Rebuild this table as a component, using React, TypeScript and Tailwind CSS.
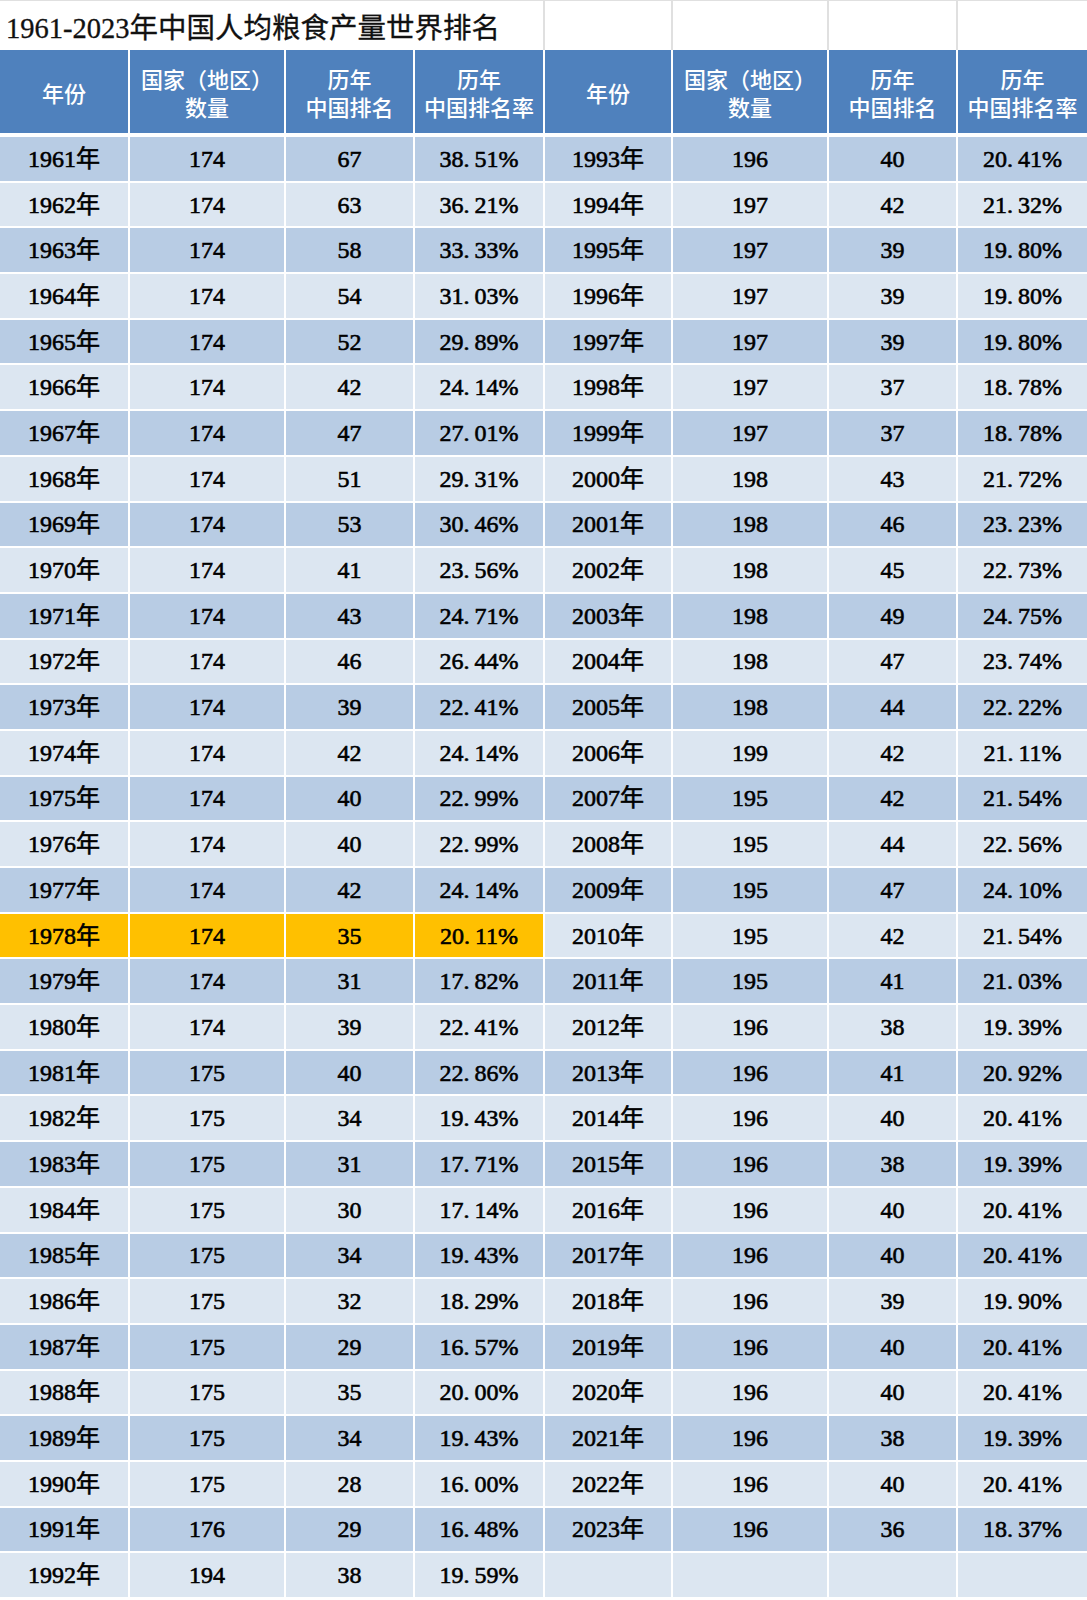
const left: [string, number, number, string][] = [
  ['1961年', 174, 67, '38.51%'],
  ['1962年', 174, 63, '36.21%'],
  ['1963年', 174, 58, '33.33%'],
  ['1964年', 174, 54, '31.03%'],
  ['1965年', 174, 52, '29.89%'],
  ['1966年', 174, 42, '24.14%'],
  ['1967年', 174, 47, '27.01%'],
  ['1968年', 174, 51, '29.31%'],
  ['1969年', 174, 53, '30.46%'],
  ['1970年', 174, 41, '23.56%'],
  ['1971年', 174, 43, '24.71%'],
  ['1972年', 174, 46, '26.44%'],
  ['1973年', 174, 39, '22.41%'],
  ['1974年', 174, 42, '24.14%'],
  ['1975年', 174, 40, '22.99%'],
  ['1976年', 174, 40, '22.99%'],
  ['1977年', 174, 42, '24.14%'],
  ['1978年', 174, 35, '20.11%'],
  ['1979年', 174, 31, '17.82%'],
  ['1980年', 174, 39, '22.41%'],
  ['1981年', 175, 40, '22.86%'],
  ['1982年', 175, 34, '19.43%'],
  ['1983年', 175, 31, '17.71%'],
  ['1984年', 175, 30, '17.14%'],
  ['1985年', 175, 34, '19.43%'],
  ['1986年', 175, 32, '18.29%'],
  ['1987年', 175, 29, '16.57%'],
  ['1988年', 175, 35, '20.00%'],
  ['1989年', 175, 34, '19.43%'],
  ['1990年', 175, 28, '16.00%'],
  ['1991年', 176, 29, '16.48%'],
  ['1992年', 194, 38, '19.59%'],
];

const right: [string, number, number, string][] = [
  ['1993年', 196, 40, '20.41%'],
  ['1994年', 197, 42, '21.32%'],
  ['1995年', 197, 39, '19.80%'],
  ['1996年', 197, 39, '19.80%'],
  ['1997年', 197, 39, '19.80%'],
  ['1998年', 197, 37, '18.78%'],
  ['1999年', 197, 37, '18.78%'],
  ['2000年', 198, 43, '21.72%'],
  ['2001年', 198, 46, '23.23%'],
  ['2002年', 198, 45, '22.73%'],
  ['2003年', 198, 49, '24.75%'],
  ['2004年', 198, 47, '23.74%'],
  ['2005年', 198, 44, '22.22%'],
  ['2006年', 199, 42, '21.11%'],
  ['2007年', 195, 42, '21.54%'],
  ['2008年', 195, 44, '22.56%'],
  ['2009年', 195, 47, '24.10%'],
  ['2010年', 195, 42, '21.54%'],
  ['2011年', 195, 41, '21.03%'],
  ['2012年', 196, 38, '19.39%'],
  ['2013年', 196, 41, '20.92%'],
  ['2014年', 196, 40, '20.41%'],
  ['2015年', 196, 38, '19.39%'],
  ['2016年', 196, 40, '20.41%'],
  ['2017年', 196, 40, '20.41%'],
  ['2018年', 196, 39, '19.90%'],
  ['2019年', 196, 40, '20.41%'],
  ['2020年', 196, 40, '20.41%'],
  ['2021年', 196, 38, '19.39%'],
  ['2022年', 196, 40, '20.41%'],
  ['2023年', 196, 36, '18.37%'],
];

const cols = 'grid grid-cols-[128px_154px_127px_128px_126px_154px_127px_129px] gap-x-[2px]';
const headers = [
  ['年份'],
  ['国家（地区）', '数量'],
  ['历年', '中国排名'],
  ['历年', '中国排名率'],
];

// SimSun-style: the period takes half a cell, so pad it
function fmt(v?: string | number) {
  if (typeof v === 'string' && v.includes('.')) {
    const [a, b] = v.split('.');
    return (
      <>
        {a}.<span className="ml-[5px]">{b}</span>
      </>
    );
  }
  return v;
}

function Cell({ value, bg }: { value?: string | number; bg: string }) {
  return (
    <div
      className={`${bg} flex items-center justify-center h-[43.7px] text-[24px] text-black [-webkit-text-stroke:0.6px_black]`}
    >
      {fmt(value)}
    </div>
  );
}

export default function App() {
  return (
    <div
      className="w-[1087px] h-[1600px] overflow-hidden bg-white"
      style={{ fontFamily: '"Liberation Serif", "Noto Sans CJK SC", serif' }}
    >
      {/* title row */}
      <div className={`${cols} bg-[#e0e0e0] pt-px h-[50px]`}>
        <div className="col-span-4 bg-white flex items-center pl-[6px] pt-[8px] text-[28.5px] leading-none text-[#111] [-webkit-text-stroke:0.3px_#111]">
          1961-2023年中国人均粮食产量世界排名
        </div>
        <div className="bg-white" />
        <div className="bg-white" />
        <div className="bg-white" />
        <div className="bg-white" />
      </div>

      {/* header */}
      <div className={`${cols} h-[83px]`} style={{ fontFamily: '"Noto Sans CJK SC", sans-serif' }}>
        {[...headers, ...headers].map((h, i) => (
          <div
            key={i}
            className="bg-[#4f81bd] flex flex-col items-center justify-center text-white text-[22px] font-medium leading-[28px]"
          >
            {h.map((line) => (
              <span key={line} className="leading-[28px]">
                {line}
              </span>
            ))}
          </div>
        ))}
      </div>

      {/* body */}
      <div className={`${cols} gap-y-[2px] mt-[4px]`}>
        {left.map((r, i) => {
          const hl = r[0] === '1978年';
          const bgL = hl ? 'bg-[#ffc000]' : i % 2 === 0 ? 'bg-[#b8cce4]' : 'bg-[#dce6f1]';
          const bgR = i % 2 === 0 ? 'bg-[#b8cce4]' : 'bg-[#dce6f1]';
          const rr = right[i];
          return [
            <Cell key={`a${i}`} value={r[0]} bg={bgL} />,
            <Cell key={`b${i}`} value={r[1]} bg={bgL} />,
            <Cell key={`c${i}`} value={r[2]} bg={bgL} />,
            <Cell key={`d${i}`} value={r[3]} bg={bgL} />,
            <Cell key={`e${i}`} value={rr?.[0]} bg={bgR} />,
            <Cell key={`f${i}`} value={rr?.[1]} bg={bgR} />,
            <Cell key={`g${i}`} value={rr?.[2]} bg={bgR} />,
            <Cell key={`h${i}`} value={rr?.[3]} bg={bgR} />,
          ];
        })}
      </div>
    </div>
  );
}
